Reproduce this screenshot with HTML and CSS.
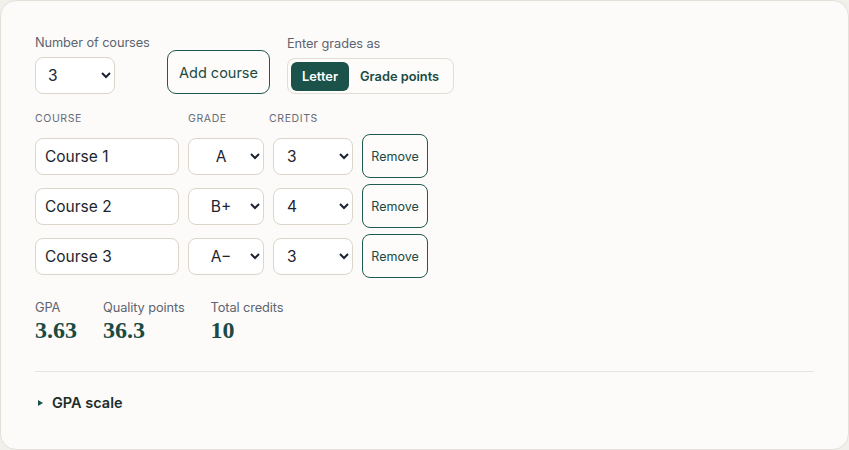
FILE: index.html
```html
<!DOCTYPE html>
<html lang="en">
<head>
<meta charset="utf-8">
<title>GPA calculator</title>
<link rel="stylesheet" href="styles.css">
</head>
<body>
<main class="card">
  <div class="controls">
    <label class="field field-count">
      <span class="label">Number of courses</span>
      <select class="select select-count">
        <option>1</option><option>2</option><option selected>3</option><option>4</option>
      </select>
    </label>
    <button class="btn-outline btn-add" type="button">Add course</button>
    <div class="field">
      <span class="label">Enter grades as</span>
      <div class="toggle">
        <button class="toggle-btn is-active" type="button">Letter</button>
        <button class="toggle-btn" type="button">Grade points</button>
      </div>
    </div>
  </div>

  <div class="thead">
    <span>Course</span>
    <span>Grade</span>
    <span>Credits</span>
  </div>

  <div class="rows">
    <div class="row">
      <input class="input" type="text" value="Course 1">
      <select class="select select-grade"><option selected>A</option><option>A-</option><option>B+</option></select>
      <select class="select select-credits"><option selected>3</option><option>4</option></select>
      <button class="btn-outline btn-remove" type="button">Remove</button>
    </div>
    <div class="row">
      <input class="input" type="text" value="Course 2">
      <select class="select select-grade"><option>A</option><option>A-</option><option selected>B+</option></select>
      <select class="select select-credits"><option>3</option><option selected>4</option></select>
      <button class="btn-outline btn-remove" type="button">Remove</button>
    </div>
    <div class="row">
      <input class="input" type="text" value="Course 3">
      <select class="select select-grade"><option>A</option><option selected>A−</option><option>B+</option></select>
      <select class="select select-credits"><option selected>3</option><option>4</option></select>
      <button class="btn-outline btn-remove" type="button">Remove</button>
    </div>
  </div>

  <div class="stats">
    <div class="stat">
      <span class="stat-label">GPA</span>
      <span class="stat-value">3.63</span>
    </div>
    <div class="stat">
      <span class="stat-label">Quality points</span>
      <span class="stat-value">36.3</span>
    </div>
    <div class="stat">
      <span class="stat-label">Total credits</span>
      <span class="stat-value">10</span>
    </div>
  </div>

  <hr class="divider">

  <details class="scale">
    <summary>GPA scale</summary>
  </details>
</main>
</body>
</html>
```

FILE: styles.css
```css
* { box-sizing: border-box; }

html, body {
  margin: 0;
  background: #f2f0eb;
}

body {
  font-family: "Inter", "Noto Sans", sans-serif;
  color: #1f2a33;
}

.card {
  width: 849px;
  height: 450px;
  background: #fcfbf9;
  border: 1px solid #e3e0da;
  border-radius: 16px;
  padding: 33px 34px 0;
}

.controls {
  display: flex;
  align-items: flex-end;
  gap: 17px;
}

.field {
  display: flex;
  flex-direction: column;
}

.field-count { width: 115px; }

.label {
  font-size: 12.8px;
  line-height: 18px;
  color: #5d6470;
  margin-bottom: 5px;
  white-space: nowrap;
  letter-spacing: -0.1px;
}

.select {
  font-family: "Inter", "Noto Sans", sans-serif;
  font-size: 15.5px;
  color: #1d2430;
  background: #fff;
  border: 1px solid #dcd5ca;
  border-radius: 8px;
  height: 37px;
  padding: 0 6px 0 8px;
}

.select-count { width: 80px; }

.btn-outline {
  font-family: "Inter", "Noto Sans", sans-serif;
  background: #fdfcfa;
  color: #1a4a43;
  border: 1px solid #1f5a50;
  border-radius: 9px;
  cursor: pointer;
}

.btn-add {
  height: 44px;
  width: 103px;
  font-size: 14.5px;
  padding: 0;
}

.toggle {
  display: flex;
  align-items: center;
  gap: 2px;
  height: 36px;
  width: 167px;
  padding: 3px;
  border: 1px solid #e3ded5;
  border-radius: 8px;
  background: #fdfcfa;
}

.toggle-btn {
  font-family: "Inter", "Noto Sans", sans-serif;
  font-weight: 600;
  font-size: 12.8px;
  height: 29px;
  border: 0;
  border-radius: 6px;
  background: transparent;
  color: #1a4a43;
  padding: 0 9px;
}

.toggle-btn.is-active {
  background: #1b5249;
  color: #ffffff;
  width: 58px;
  padding: 0;
}

.thead {
  display: grid;
  grid-template-columns: 144px 72px auto;
  column-gap: 9px;
  margin-top: 18px;
  font-size: 10.5px;
  line-height: 14px;
  letter-spacing: 0.6px;
  text-transform: uppercase;
  color: #646b78;
}

.rows {
  display: flex;
  flex-direction: column;
  gap: 6px;
  margin-top: 8px;
}

.row {
  display: grid;
  grid-template-columns: 144px 76px 80px 66px;
  column-gap: 9px;
  align-items: center;
  height: 44px;
}

.input {
  font-family: "Inter", "Noto Sans", sans-serif;
  font-size: 15.5px;
  color: #1d2430;
  height: 37px;
  width: 144px;
  border: 1px solid #dcd5ca;
  border-radius: 8px;
  background: #fff;
  padding: 0 9px;
}

.select-grade {
  width: 76px;
  text-align: center;
  text-align-last: center;
}

.select-credits { width: 80px; padding-left: 9px; }

.btn-remove {
  height: 44px;
  width: 66px;
  font-size: 12.5px;
  padding: 0;
  border-radius: 8px;
}

.stats {
  display: flex;
  gap: 26px;
  margin-top: 21px;
}

.stat {
  display: flex;
  flex-direction: column;
}

.stat-label {
  font-size: 12.8px;
  line-height: 18px;
  color: #5d6470;
  letter-spacing: -0.1px;
}

.stat-value {
  font-family: "Liberation Serif", "DejaVu Serif", serif;
  font-weight: 700;
  font-size: 24px;
  line-height: 26px;
  color: #1b4a45;
}

.divider {
  border: 0;
  border-top: 1px solid #e2e5e2;
  margin: 28px 0 0;
}

.scale {
  margin-top: 21px;
}

.scale summary {
  display: flex;
  align-items: center;
  font-size: 14.5px;
  font-weight: 600;
  color: #1c2e2c;
  line-height: 20px;
  list-style: none;
  cursor: pointer;
}

.scale summary::-webkit-details-marker { display: none; }

.scale summary::before {
  content: "";
  width: 0;
  height: 0;
  margin: 0 9px 0 3px;
  border-top: 3px solid transparent;
  border-bottom: 3px solid transparent;
  border-left: 5px solid #1b5249;
}
```
